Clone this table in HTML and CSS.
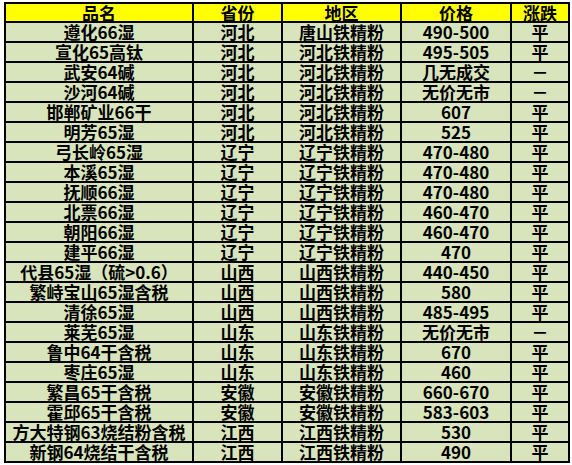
FILE: index.html
```html
<!DOCTYPE html>
<html lang="zh">
<head>
<meta charset="utf-8">
<link rel="stylesheet" href="styles.css">
</head>
<body>
<div class="sheet">
<table class="price">
<colgroup>
<col class="c1"><col class="c2"><col class="c3"><col class="c4"><col class="c5">
</colgroup>
<thead>
<tr><th>品名</th><th>省份</th><th>地区</th><th>价格</th><th>涨跌</th></tr>
</thead>
<tbody>
<tr><td>遵化66湿</td><td>河北</td><td>唐山铁精粉</td><td>490-500</td><td>平</td></tr>
<tr><td>宣化65高钛</td><td>河北</td><td>河北铁精粉</td><td>495-505</td><td>平</td></tr>
<tr><td>武安64碱</td><td>河北</td><td>河北铁精粉</td><td>几无成交</td><td>－</td></tr>
<tr><td>沙河64碱</td><td>河北</td><td>河北铁精粉</td><td>无价无市</td><td>－</td></tr>
<tr><td>邯郸矿业66干</td><td>河北</td><td>河北铁精粉</td><td>607</td><td>平</td></tr>
<tr><td>明芳65湿</td><td>河北</td><td>河北铁精粉</td><td>525</td><td>平</td></tr>
<tr><td>弓长岭65湿</td><td>辽宁</td><td>辽宁铁精粉</td><td>470-480</td><td>平</td></tr>
<tr><td>本溪65湿</td><td>辽宁</td><td>辽宁铁精粉</td><td>470-480</td><td>平</td></tr>
<tr><td>抚顺66湿</td><td>辽宁</td><td>辽宁铁精粉</td><td>470-480</td><td>平</td></tr>
<tr><td>北票66湿</td><td>辽宁</td><td>辽宁铁精粉</td><td>460-470</td><td>平</td></tr>
<tr><td>朝阳66湿</td><td>辽宁</td><td>辽宁铁精粉</td><td>460-470</td><td>平</td></tr>
<tr><td>建平66湿</td><td>辽宁</td><td>辽宁铁精粉</td><td>470</td><td>平</td></tr>
<tr><td>代县65湿（硫&gt;0.6）</td><td>山西</td><td>山西铁精粉</td><td>440-450</td><td>平</td></tr>
<tr><td>繁峙宝山65湿含税</td><td>山西</td><td>山西铁精粉</td><td>580</td><td>平</td></tr>
<tr><td>清徐65湿</td><td>山西</td><td>山西铁精粉</td><td>485-495</td><td>平</td></tr>
<tr><td>莱芜65湿</td><td>山东</td><td>山东铁精粉</td><td>无价无市</td><td>－</td></tr>
<tr><td>鲁中64干含税</td><td>山东</td><td>山东铁精粉</td><td>670</td><td>平</td></tr>
<tr><td>枣庄65湿</td><td>山东</td><td>山东铁精粉</td><td>460</td><td>平</td></tr>
<tr><td>繁昌65干含税</td><td>安徽</td><td>安徽铁精粉</td><td>660-670</td><td>平</td></tr>
<tr><td>霍邱65干含税</td><td>安徽</td><td>安徽铁精粉</td><td>583-603</td><td>平</td></tr>
<tr><td>方大特钢63烧结粉含税</td><td>江西</td><td>江西铁精粉</td><td>530</td><td>平</td></tr>
<tr><td>新钢64烧结干含税</td><td>江西</td><td>江西铁精粉</td><td>490</td><td>平</td></tr>
</tbody>
</table>
</div>
</body>
</html>
```

FILE: styles.css
```css
html, body {
  margin: 0;
  padding: 0;
  background: #ffffff;
}
.sheet {
  padding: 2px 0 0 4px;
}
.price {
  border-collapse: separate;
  border-spacing: 0;
  border-top: 2px solid #000;
  border-left: 2px solid #000;
  table-layout: fixed;
  width: 566px;
  font-family: "Noto Sans CJK SC", "Noto Sans", sans-serif;
  font-weight: bold;
  font-size: 17px;
  line-height: 16px;
  color: #000;
}
.c1 { width: 188px; }
.c2 { width: 89px; }
.c3 { width: 119px; }
.c4 { width: 110px; }
.c5 { width: 58px; }
.price th,
.price td {
  border-right: 2px solid #000;
  border-bottom: 2px solid #000;
  padding: 0;
  text-align: center;
  vertical-align: middle;
  white-space: nowrap;
  box-sizing: border-box;
  line-height: 16px;
}
.price th {
  background: #ffff00;
  height: 19px;
}
.price td {
  background: #d8e4bc;
  height: 20px;
}
```
